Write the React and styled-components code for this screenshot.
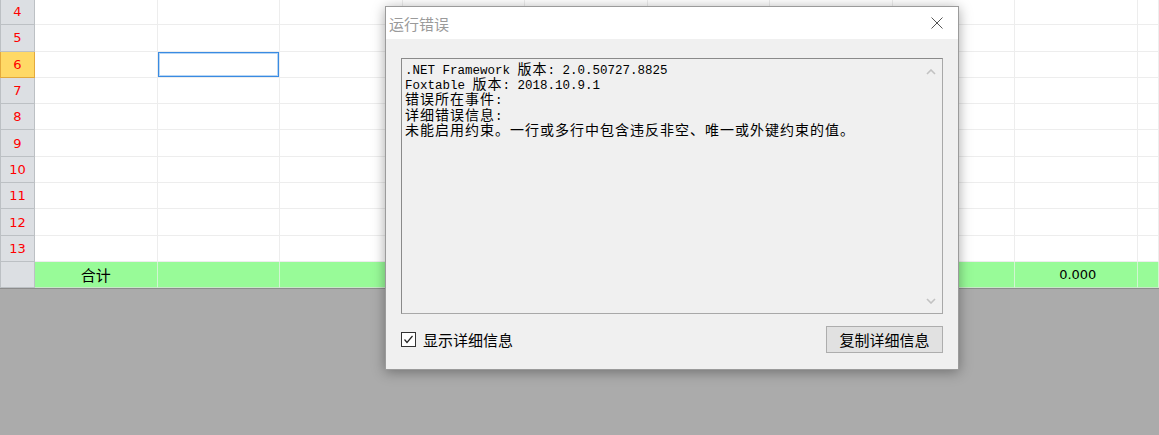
import React from 'react'
import styled, { createGlobalStyle } from 'styled-components'

const GlobalStyle = createGlobalStyle`
  html, body {
    margin: 0;
    padding: 0;
    background: #ababab;
  }
  body {
    font-family: "Liberation Sans", "Noto Sans CJK SC", sans-serif;
    overflow: hidden;
  }
`

const Screen = styled.div`
  position: relative;
  width: 1159px;
  height: 435px;
  display: flex;
  flex-direction: column;
  overflow: hidden;
  background: #ababab;
`

const Sheet = styled.div`
  margin-top: -1px;
  background: #fff;
  border-bottom: 1px solid #8c8c8c;
`

const Row = styled.div`
  display: grid;
  grid-template-columns: 35px repeat(9, 122.5px) 1fr;
  height: 26.3px;
  background: ${p => (p.$total ? '#98fb98' : '#fff')};
`

const HeaderCell = styled.div`
  display: flex;
  align-items: center;
  justify-content: center;
  box-sizing: border-box;
  background: ${p => (p.$active ? '#ffd966' : '#dcdfe3')};
  border: 1px solid ${p => (p.$active ? '#e3a93c' : '#bcc0c4')};
  border-top: none;
  color: #f00;
  font-family: "DejaVu Sans", "Liberation Sans", sans-serif;
  font-size: 13px;
`

const Cell = styled.div`
  display: flex;
  align-items: center;
  justify-content: center;
  box-sizing: border-box;
  border-right: 1px solid ${p => (p.$total ? '#d2f5d2' : '#ededed')};
  border-bottom: 1px solid ${p => (p.$total ? '#c8e8c8' : '#ededed')};
  color: #000;
  font-size: ${p => (p.$cjk ? '15px' : '13px')};
  font-family: ${p => (p.$cjk ? '"Noto Sans CJK SC", sans-serif' : '"DejaVu Sans", "Liberation Sans", sans-serif')};
  padding-left: ${p => (p.$shift ? '4px' : '0')};
  box-shadow: ${p => (p.$selected ? 'inset 0 0 0 1px #3a8be2, inset 0 0 0 2px #b7d6f5' : 'none')};
`

const GrayArea = styled.div`
  flex: 1;
  background: #ababab;
`

const Dialog = styled.div`
  position: absolute;
  left: 385px;
  top: 6px;
  width: 574px;
  box-sizing: border-box;
  border: 1px solid #9b9b9b;
  background: #f0f0f0;
  box-shadow: 0 2px 12px rgba(0, 0, 0, 0.35);
  display: flex;
  flex-direction: column;
`

const TitleBar = styled.div`
  height: 32px;
  background: #fff;
  display: flex;
  align-items: center;
  justify-content: space-between;
  padding: 0 15px 0 3px;
`

const Title = styled.div`
  font-family: "Noto Sans CJK SC", sans-serif;
  font-size: 15px;
  color: #9a9a9a;
`

const CloseButton = styled.div`
  width: 12px;
  height: 12px;
  display: flex;
`

const DialogBody = styled.div`
  padding: 19px 15px 16px 15px;
  display: flex;
  flex-direction: column;
  gap: 12px;
`

const DetailBox = styled.div`
  height: 256px;
  box-sizing: border-box;
  border: 1px solid #8a8a8a;
  border-right-color: #a8a8a8;
  border-bottom-color: #a8a8a8;
  display: flex;
`

const DetailText = styled.div`
  flex: 1;
  padding: 2px 3px;
  font-family: "Noto Sans CJK SC", sans-serif;
  font-size: 14px;
  letter-spacing: 1px;
  line-height: 15.2px;
  color: #000;
`

const Line = styled.div`
  white-space: pre;
  height: 15.2px;
`

const Mono = styled.span`
  font-family: "Liberation Mono", monospace;
  font-size: 12.5px;
  letter-spacing: 0;
`

const Scrollbar = styled.div`
  width: 22px;
  display: flex;
  flex-direction: column;
  justify-content: space-between;
  align-items: center;
  padding: 10px 0 9px;
`

const Footer = styled.div`
  display: flex;
  align-items: center;
  justify-content: space-between;
  height: 27px;
`

const CheckLabel = styled.label`
  display: flex;
  align-items: center;
  gap: 7px;
  font-family: "Noto Sans CJK SC", sans-serif;
  font-size: 15px;
  color: #000;
`

const CheckBox = styled.span`
  width: 15px;
  height: 15px;
  box-sizing: border-box;
  border: 1px solid #333;
  background: #fff;
  display: flex;
`

const Button = styled.div`
  width: 117px;
  height: 27px;
  box-sizing: border-box;
  border: 1px solid #adadad;
  background: #e1e1e1;
  display: flex;
  align-items: center;
  justify-content: center;
  font-family: "Noto Sans CJK SC", sans-serif;
  font-size: 15px;
  color: #000;
`

const rows = [4, 5, 6, 7, 8, 9, 10, 11, 12, 13]

const details = [
  [['m', '.NET Framework '], ['c', '版本'], ['m', ': 2.0.50727.8825']],
  [['m', 'Foxtable '], ['c', '版本'], ['m', ': 2018.10.9.1']],
  [['c', '错误所在事件'], ['m', ':']],
  [['c', '详细错误信息'], ['m', ':']],
  [['c', '未能启用约束。一行或多行中包含违反非空、唯一或外键约束的值。']],
]

const Chevron = ({ up }) => (
  <svg width="10" height="6" viewBox="0 0 10 6">
    <polyline
      points={up ? '1,5 5,1 9,5' : '1,1 5,5 9,1'}
      fill="none"
      stroke="#c2c2c2"
      strokeWidth="1.6"
    />
  </svg>
)

const App = () => {
  return (
    <Screen>
      <GlobalStyle />
      <Sheet>
        {rows.map(n => (
          <Row key={n}>
            <HeaderCell $active={n === 6}>{n}</HeaderCell>
            {Array.from({ length: 10 }).map((_, i) => (
              <Cell key={i} $selected={n === 6 && i === 1} />
            ))}
          </Row>
        ))}
        <Row $total>
          <HeaderCell />
          {Array.from({ length: 10 }).map((_, i) => (
            <Cell key={i} $total $cjk={i === 0} $shift={i === 8}>
              {i === 0 ? '合计' : i === 8 ? '0.000' : ''}
            </Cell>
          ))}
        </Row>
      </Sheet>
      <GrayArea />

      <Dialog>
        <TitleBar>
          <Title>运行错误</Title>
          <CloseButton>
            <svg width="12" height="12" viewBox="0 0 12 12">
              <path d="M0.5 0.5 L11.5 11.5 M11.5 0.5 L0.5 11.5" stroke="#555" strokeWidth="1" />
            </svg>
          </CloseButton>
        </TitleBar>
        <DialogBody>
          <DetailBox>
            <DetailText>
              {details.map((line, i) => (
                <Line key={i}>
                  {line.map(([k, t], j) => (k === 'm' ? <Mono key={j}>{t}</Mono> : <span key={j}>{t}</span>))}
                </Line>
              ))}
            </DetailText>
            <Scrollbar>
              <Chevron up />
              <Chevron />
            </Scrollbar>
          </DetailBox>
          <Footer>
            <CheckLabel>
              <CheckBox>
                <svg width="13" height="13" viewBox="0 0 13 13">
                  <polyline points="2.5,6.5 5,9.5 10.5,3" fill="none" stroke="#222" strokeWidth="1.2" />
                </svg>
              </CheckBox>
              显示详细信息
            </CheckLabel>
            <Button>复制详细信息</Button>
          </Footer>
        </DialogBody>
      </Dialog>
    </Screen>
  )
}

export default App
